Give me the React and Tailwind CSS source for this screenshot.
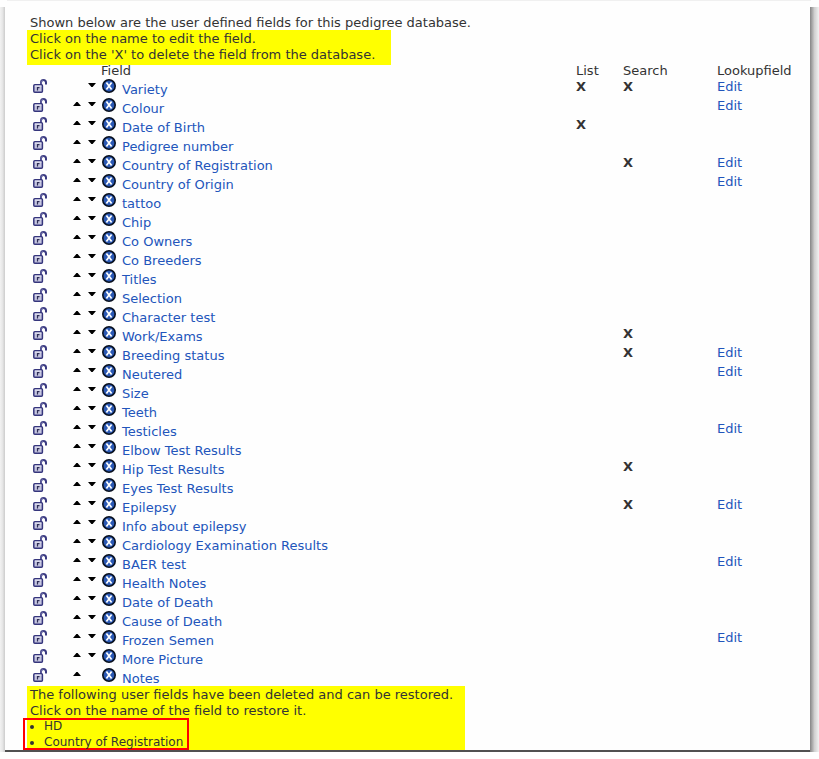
import React from "react";

const fields = [
  ["Variety", 1, 1, 1],
  ["Colour", 0, 0, 1],
  ["Date of Birth", 1, 0, 0],
  ["Pedigree number", 0, 0, 0],
  ["Country of Registration", 0, 1, 1],
  ["Country of Origin", 0, 0, 1],
  ["tattoo", 0, 0, 0],
  ["Chip", 0, 0, 0],
  ["Co Owners", 0, 0, 0],
  ["Co Breeders", 0, 0, 0],
  ["Titles", 0, 0, 0],
  ["Selection", 0, 0, 0],
  ["Character test", 0, 0, 0],
  ["Work/Exams", 0, 1, 0],
  ["Breeding status", 0, 1, 1],
  ["Neutered", 0, 0, 1],
  ["Size", 0, 0, 0],
  ["Teeth", 0, 0, 0],
  ["Testicles", 0, 0, 1],
  ["Elbow Test Results", 0, 0, 0],
  ["Hip Test Results", 0, 1, 0],
  ["Eyes Test Results", 0, 0, 0],
  ["Epilepsy", 0, 1, 1],
  ["Info about epilepsy", 0, 0, 0],
  ["Cardiology Examination Results", 0, 0, 0],
  ["BAER test", 0, 0, 1],
  ["Health Notes", 0, 0, 0],
  ["Date of Death", 0, 0, 0],
  ["Cause of Death", 0, 0, 0],
  ["Frozen Semen", 0, 0, 1],
  ["More Picture", 0, 0, 0],
  ["Notes", 0, 0, 0],
];

const deleted = ["HD", "Country of Registration"];

function LockIcon() {
  return (
    <svg width="14" height="14" viewBox="0 0 14 14" fill="none" aria-hidden="true">
      <path d="M8 6V3.6C8 1.9 8.9 1 10.4 1S13 1.9 13 3.6V5.4" stroke="#3a3a80" strokeWidth="2" />
      <path d="M8.1 5.5V3.6c0-1.6.8-2.4 2.3-2.4" stroke="#8f8fc4" strokeWidth=".7" />
      <rect x=".8" y="5.8" width="8.6" height="7.4" rx="1" fill="#c5c5df" stroke="#35357c" strokeWidth="1.5" />
      <path d="M1.8 7h6.6" stroke="#eeeef8" />
      <path d="M4.5 11.5V8.7h2" stroke="#2c2c55" strokeWidth="1.2" />
    </svg>
  );
}

function DeleteIcon() {
  return (
    <svg width="14" height="14" viewBox="0 0 14 14" fill="none" aria-hidden="true">
      <circle cx="7" cy="7" r="6.2" fill="#2a58b4" stroke="#08101f" strokeWidth="1.6" />
      <path d="M4.4 3.4l5.2 7.2M9.6 3.4L4.4 10.6" stroke="#fff" strokeWidth="1.7" />
    </svg>
  );
}

function Arrow({ up }) {
  return (
    <svg width="8" height="5" viewBox="0 0 8 5" fill="#000" aria-hidden="true">
      {up ? <path d="M0 4h8L4.6 0H3.4z" /> : <path d="M0 0h8L4.6 4H3.4z" />}
    </svg>
  );
}

function Edge({ side }) {
  return side === "left" ? (
    <div className="w-[5px] shrink-0 bg-linear-to-r from-[#f2f2f2] via-[#e6e6e6] to-[#cccccc]" />
  ) : (
    <div className="w-[9px] shrink-0 bg-linear-to-r from-[#858585] via-[#d0d0d0] to-[#f2f2f2]" />
  );
}

export default function App() {
  const last = fields.length - 1;
  return (
    <div className="min-h-screen bg-[#fefefe] font-['DejaVu_Sans',Verdana,sans-serif] text-[13px] leading-4 text-[#333]">
      <div className="mr-2 ml-[7px] h-px bg-[#f0f0f0]" />
      <div className="flex pt-1.5">
        <Edge side="left" />
        <main className="min-w-0 grow border-b-2 border-[#505050] pt-2 pl-[22px]">
          <p className="h-[15px] pl-[3px]">Shown below are the user defined fields for this pedigree database.</p>
          <p className="h-[35px] w-fit bg-[#ffff00] pt-px pr-4 pl-[3px]">
            Click on the name to edit the field.
            <br />
            Click on the 'X' to delete the field from the database.
          </p>
          <table className="w-full table-fixed border-collapse">
            <colgroup>
              <col className="w-[44px]" />
              <col className="w-[30px]" />
              <col className="w-[475px]" />
              <col className="w-[47px]" />
              <col className="w-[94px]" />
              <col />
            </colgroup>
            <thead>
              <tr className="h-[13px] text-left leading-3">
                <td />
                <td />
                <th className="p-0 align-top font-normal">Field</th>
                <th className="p-0 align-top font-normal">List</th>
                <th className="p-0 align-top font-normal">Search</th>
                <th className="p-0 align-top font-normal">Lookupfield</th>
              </tr>
            </thead>
            <tbody>
              {fields.map(([name, list, search, lookup], i) => (
                <tr key={name} className="h-[19px] align-top">
                  <td className="p-0">
                    <button type="button" aria-label={"Lock " + name} className="mt-px ml-1.5 block">
                      <LockIcon />
                    </button>
                  </td>
                  <td className="p-0">
                    <div className="flex gap-[7px] pt-[5px] pl-0.5">
                      {i > 0 ? (
                        <button type="button" aria-label={"Move " + name + " up"} className="block h-[5px] w-2">
                          <Arrow up />
                        </button>
                      ) : (
                        <span className="w-2" />
                      )}
                      {i < last && (
                        <button type="button" aria-label={"Move " + name + " down"} className="block h-[5px] w-2">
                          <Arrow />
                        </button>
                      )}
                    </div>
                  </td>
                  <td className="p-0">
                    <div className="flex h-[19px] items-start gap-[6px] pl-px">
                      <button type="button" aria-label={"Delete " + name} className="mt-px block">
                        <DeleteIcon />
                      </button>
                      <a href="#field" className="mt-1 text-[#2255bb]">{name}</a>
                    </div>
                  </td>
                  <td className="p-0 pt-px font-bold">{list ? "X" : ""}</td>
                  <td className="p-0 pt-px font-bold">{search ? "X" : ""}</td>
                  <td className="p-0 pt-px">{lookup ? <a href="#lookup" className="text-[#2255bb]">Edit</a> : null}</td>
                </tr>
              ))}
            </tbody>
          </table>
          <section className="w-fit bg-[#ffff00] pr-3">
            <p className="h-8 pt-px pl-[3px]">
              The following user fields have been deleted and can be restored.
              <br />
              Click on the name of the field to restore it.
            </p>
            <ul className="-ml-1 h-8 w-[166px] list-disc pl-[21px] text-[12px] inset-ring-2 inset-ring-[#ff0000]">
              {deleted.map((name) => (
                <li key={name} className="leading-4">
                  <a href="#restore">{name}</a>
                </li>
              ))}
            </ul>
          </section>
        </main>
        <Edge side="right" />
      </div>
    </div>
  );
}
